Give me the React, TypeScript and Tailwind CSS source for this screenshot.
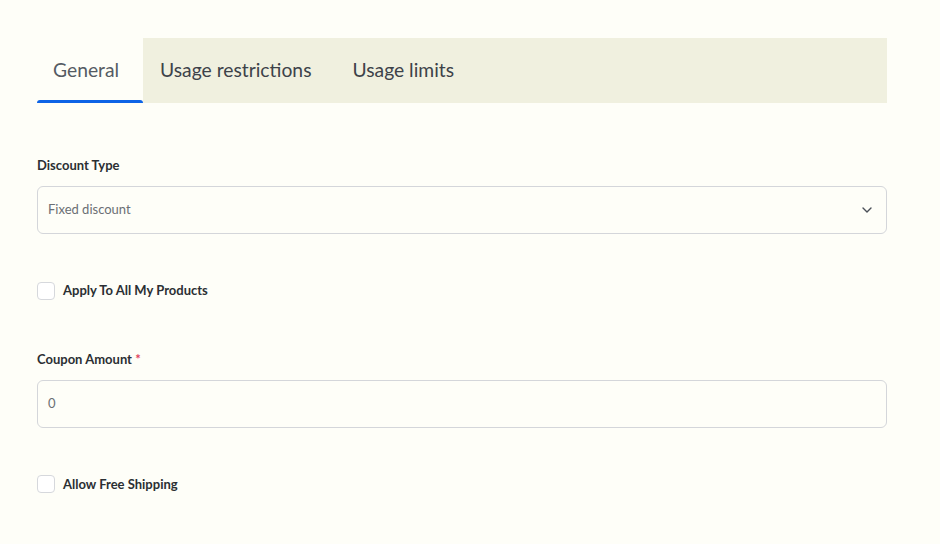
import React from "react";

function Checkbox() {
  return <span className="block w-[18px] h-[18px] rounded-[4px] border border-[#d6d8dc] bg-white shrink-0" />;
}

export default function App() {
  return (
    <div className="w-[940px] h-[544px] bg-[#fefef8] overflow-hidden" style={{ fontFamily: "Lato, 'Noto Sans', sans-serif" }}>
      <div className="pl-[37px] pr-[53px] pt-[38px]">
        <div className="flex h-[65px]">
          <div className="relative w-[106px] flex items-center pl-[16px] text-[19.3px] text-[#555b63]">
            General
            <span className="absolute left-0 right-0 bottom-0 h-[3px] rounded-t-[3px] bg-[#0d63e6]" />
          </div>
          <div className="flex-1 flex items-center bg-[#f0f0df] pl-[17px] gap-[41px] text-[19.3px] text-[#3d4249]">
            <span>Usage restrictions</span>
            <span>Usage limits</span>
          </div>
        </div>

        <div className="mt-[54px] text-[13px] font-bold text-[#2b2f33] leading-[16px]">Discount Type</div>
        <div className="mt-[13px] h-[48px] rounded-[6px] border border-[#d4d6da] flex items-center justify-between pl-[10px] pr-[14px]">
          <span className="text-[13px] text-[#6b6f74]">Fixed discount</span>
          <svg width="10" height="6" viewBox="0 0 10 6" fill="none" stroke="#4b5058" strokeWidth="1.4" strokeLinecap="round" strokeLinejoin="round">
            <path d="M1 1l4 4 4-4" />
          </svg>
        </div>

        <div className="mt-[47px] flex items-center gap-[8px]">
          <Checkbox />
          <span className="text-[13px] font-bold text-[#2b2f33]">Apply To All My Products</span>
        </div>

        <div className="mt-[50px] text-[13px] font-bold text-[#2b2f33] leading-[16px]">
          Coupon Amount <span className="text-[#e0405a]">*</span>
        </div>
        <div className="mt-[13px] h-[48px] rounded-[6px] border border-[#d4d6da] flex items-center pl-[10px]">
          <span className="text-[13px] text-[#6b6f74]">0</span>
        </div>

        <div className="mt-[47px] flex items-center gap-[8px]">
          <Checkbox />
          <span className="text-[13px] font-bold text-[#2b2f33]">Allow Free Shipping</span>
        </div>
      </div>
    </div>
  );
}
